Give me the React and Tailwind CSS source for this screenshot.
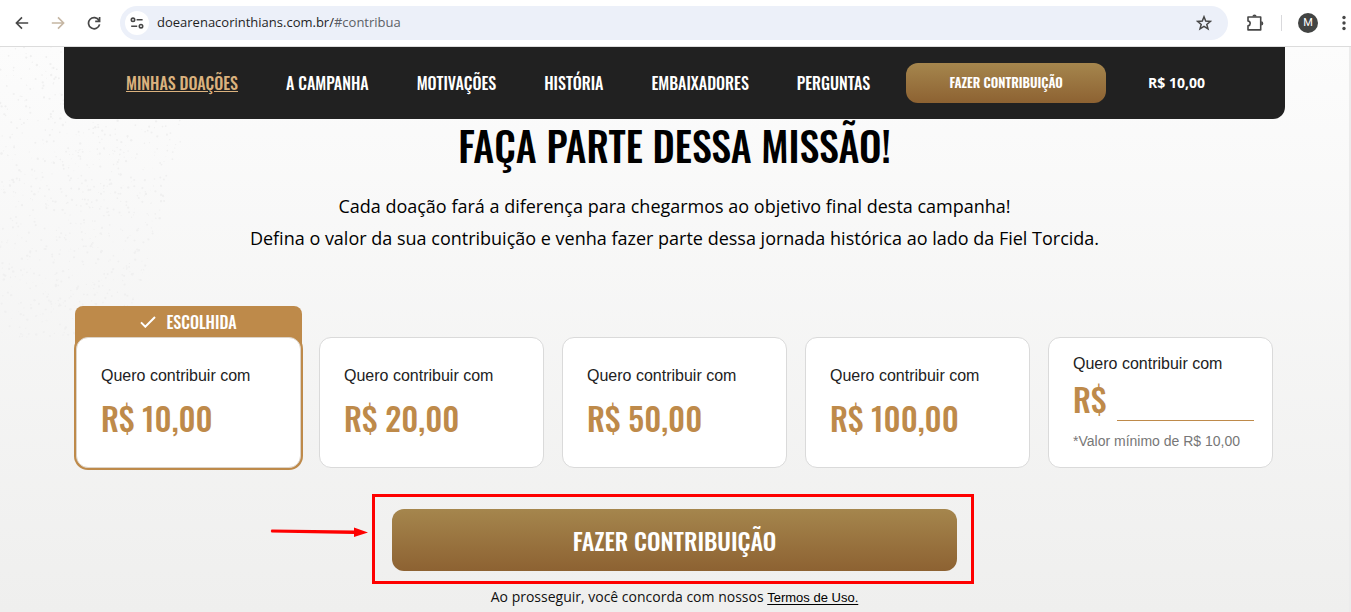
import { useState } from "react";

const links = [
  { label: "MINHAS DOAÇÕES", href: "#doacoes", active: true },
  { label: "A CAMPANHA", href: "#campanha" },
  { label: "MOTIVAÇÕES", href: "#motivacoes" },
  { label: "HISTÓRIA", href: "#historia" },
  { label: "EMBAIXADORES", href: "#embaixadores" },
  { label: "PERGUNTAS", href: "#perguntas" },
];

const amounts = ["10,00", "20,00", "50,00", "100,00"];

// spreads paper grain along the left edge, denser near the border
const specks = Array.from({ length: 900 }, (_, i) => {
  const a = Math.abs(Math.sin(i * 12.9898) * 43758.5453) % 1;
  const b = Math.abs(Math.sin(i * 78.233) * 12543.123) % 1;
  const c = Math.abs(Math.sin(i * 39.425) * 9631.77) % 1;
  return { x: a * (1 - b * 0.4) * 210, y: b * 290, r: 0.4 + c * 0.8 };
});

function BrowserBar() {
  return (
    <header className="flex h-[47px] items-center border-b border-[#dcdcdc] bg-white pl-3 text-[#474747]">
      <button type="button" aria-label="Voltar" className="flex size-5 items-center justify-center">
        <svg viewBox="0 0 14 14" className="size-3.5" fill="none" stroke="currentColor" strokeWidth="1.6">
          <path d="M13.2 7H1.6M7 1.4 1.4 7 7 12.6" />
        </svg>
      </button>
      <button type="button" aria-label="Avançar" className="ml-4 flex size-5 items-center justify-center text-[#c5b6a3]">
        <svg viewBox="0 0 14 14" className="size-3.5" fill="none" stroke="currentColor" strokeWidth="1.6">
          <path d="M.8 7h11.6M7 1.4 12.6 7 7 12.6" />
        </svg>
      </button>
      <button type="button" aria-label="Recarregar" className="ml-4 flex size-5 items-center justify-center">
        <svg viewBox="0 0 14 14" className="size-3.5" fill="none" stroke="currentColor" strokeWidth="1.7">
          <path d="M12 4.4A5.6 5.6 0 1 0 12.6 8.4M12.6 1v4.3H8.2" />
        </svg>
      </button>

      <div className="ml-4 flex h-[34px] min-w-0 flex-1 items-center rounded-full bg-[#ecf0f9] pr-4 pl-[5px]">
        <button type="button" aria-label="Informações do site" className="flex size-6 items-center justify-center rounded-full bg-white">
          <svg viewBox="0 0 14 12" className="h-3 w-3.5" fill="none" stroke="currentColor" strokeWidth="1.6">
            <circle cx="3" cy="2.8" r="1.7" />
            <path d="M6.6 2.8h6M1.2 9.2h6" />
            <circle cx="11" cy="9.2" r="1.7" />
          </svg>
        </button>
        <p className="ml-2 flex-1 truncate font-['Open_Sans',sans-serif] text-[13px] text-[#1f1f1f]">
          doearenacorinthians.com.br/<span className="text-[#5c5f66]">#contribua</span>
        </p>
        <button type="button" aria-label="Favoritar">
          <svg viewBox="0 0 16 16" className="size-4" fill="none" stroke="currentColor" strokeWidth="1.5">
            <path d="m8 1.8 1.7 4.3 4.7.3-3.6 3 1.2 4.5L8 11.4l-4 2.5 1.2-4.5-3.6-3 4.7-.3Z" />
          </svg>
        </button>
      </div>

      <button type="button" aria-label="Extensões" className="ml-[18px]">
        <svg viewBox="0 0 18 18" className="size-[18px]" fill="none" stroke="currentColor" strokeWidth="1.6">
          <path d="M2 3h12.700v12.900H2v-4c2.900-.7 2.900-4.300 0-5Z" strokeLinejoin="round" />
          <path d="M6.400 2.600a2.100 2.100 0 0 1 4.200 0ZM15.200 7.300a2.100 2.100 0 0 1 0 4.200Z" fill="currentColor" stroke="none" />
        </svg>
      </button>
      <span className="ml-[17px] h-4 w-px bg-[#d9d9dc]" />
      <button
        type="button"
        aria-label="Perfil"
        className="ml-4 size-5 rounded-full bg-[#424443] text-center font-[Roboto,sans-serif] text-[11px] leading-5 text-white"
      >
        M
      </button>
      <button type="button" aria-label="Menu" className="mr-px ml-5 flex w-3 justify-center">
        <svg viewBox="0 0 4 16" className="h-4 w-1" fill="currentColor">
          <circle cx="2" cy="2.500" r="1.700" />
          <circle cx="2" cy="8" r="1.700" />
          <circle cx="2" cy="13.500" r="1.700" />
        </svg>
      </button>
    </header>
  );
}

function NavBar() {
  return (
    <nav className="mx-16 flex h-[72px] items-center rounded-b-xl bg-[#212121] pl-[62px] font-['Oswald',sans-serif] font-medium text-white">
      <ul className="flex gap-12 text-base">
        {links.map((link) => (
          <li key={link.label} className="whitespace-nowrap">
            <a href={link.href} className={link.active ? "text-[#dbb27e] underline underline-offset-1" : ""}>
              {link.label}
            </a>
          </li>
        ))}
      </ul>
      <button type="button" className="ml-9 h-10 w-[200px] rounded-xl bg-linear-to-b from-[#a5864d] to-[#8d6232] text-[13px] font-semibold">
        FAZER CONTRIBUIÇÃO
      </button>
      <span className="ml-[42px] font-['Open_Sans',sans-serif] text-sm font-bold whitespace-nowrap">R$ 10,00</span>
    </nav>
  );
}

function AmountCard({ amount, checked, onSelect }) {
  return (
    <label className="relative block cursor-pointer">
      <input type="radio" name="valor" value={amount} checked={checked} onChange={onSelect} className="sr-only" />
      {checked && (
        <span className="absolute inset-x-0 -top-[31px] -mx-px flex h-12 items-start justify-center gap-2.5 rounded-t-lg bg-[#be8a4a] pt-1 font-['Oswald',sans-serif] text-base font-medium text-white">
          <svg viewBox="0 0 16 12" className="mt-1.5 h-3 w-4" fill="none" stroke="currentColor" strokeWidth="2">
            <path d="m1 6.400 4.300 4.300L15 1" />
          </svg>
          ESCOLHIDA
        </span>
      )}
      <span
        className={`relative block h-[131px] rounded-xl border bg-white px-6 pt-[26px] ${
          checked ? "border-[#dcd3c8] ring-2 ring-[#be8a4a]" : "border-[#dadada]"
        }`}
      >
        <span className="block text-base text-[#222]">Quero contribuir com</span>
        <span className="mt-2.5 block font-['Oswald',sans-serif] text-[32px] leading-10 font-medium text-[#be8a4a]">
          R$ {amount}
        </span>
      </span>
    </label>
  );
}

function App() {
  const [selected, setSelected] = useState("10,00");
  const [custom, setCustom] = useState("");

  return (
    <div className="min-h-screen bg-white font-['Liberation_Sans',Arial,sans-serif]">
      <BrowserBar />
      <main className="relative border-r-2 border-[#ececec] bg-linear-to-b from-[#fcfcfc] to-[#efefee] pb-1">
        <svg className="pointer-events-none absolute top-0 left-0 h-[340px] w-60" fill="#f0f0f0">
          {specks.map((s, i) => (
            <circle key={i} cx={s.x} cy={s.y} r={s.r} />
          ))}
        </svg>

        <div className="relative">
          <NavBar />

          <section id="contribua" className="text-center text-black">
            <h1 className="font-['Oswald',sans-serif] text-[40px] leading-[52px] font-medium">
              FAÇA PARTE DESSA MISSÃO!
            </h1>
            <p className="mt-[19px] font-['Open_Sans',sans-serif] text-lg leading-8">
              Cada doação fará a diferença para chegarmos ao objetivo final desta campanha!
              <br />
              Defina o valor da sua contribuição e venha fazer parte dessa jornada histórica ao lado da Fiel Torcida.
            </p>
          </section>

          <form onSubmit={(e) => e.preventDefault()}>
            <div className="mx-[76px] mt-[83px] grid grid-cols-5 gap-[18px]">
              {amounts.map((amount) => (
                <AmountCard
                  key={amount}
                  amount={amount}
                  checked={selected === amount}
                  onSelect={() => setSelected(amount)}
                />
              ))}
              <div className="h-[131px] rounded-xl border border-[#dadada] bg-white pt-3.5 pr-[18px] pl-6">
                <label htmlFor="outro" className="block text-base text-[#222]">
                  Quero contribuir com
                </label>
                <div className="flex h-[45px] items-end gap-2.5">
                  <span className="font-['Oswald',sans-serif] text-[32px] leading-[45px] font-medium text-[#be8a4a]">
                    R$
                  </span>
                  <input
                    id="outro"
                    type="text"
                    inputMode="decimal"
                    value={custom}
                    onChange={(e) => setCustom(e.target.value)}
                    className="h-9 min-w-0 flex-1 border-b border-b-[#be8a4a] bg-transparent text-2xl text-[#be8a4a] outline-none"
                  />
                </div>
                <p className="mt-2.5 text-sm text-[#777]">*Valor mínimo de R$ 10,00</p>
              </div>
            </div>

            <div className="relative mx-auto mt-[41px] w-full max-w-[565px]">
              <div className="pointer-events-none absolute -top-[15px] -right-[17px] -bottom-[13px] -left-5 border-3 border-[#fe0000]">
                <svg viewBox="0 0 98 12" className="absolute top-[29px] right-full mr-[7px] h-3 w-[98px]" fill="#fe0000">
                  <path d="M1.500 3.500 84 4.500V1.500l14 5-14 4.500V8L1.500 6.500Q0 5 1.500 3.500Z" />
                </svg>
              </div>
              <button
                type="submit"
                className="block h-[62px] w-full rounded-xl bg-linear-to-b from-[#a5864d] to-[#8d6232] font-['Oswald',sans-serif] text-2xl font-medium text-white"
              >
                FAZER CONTRIBUIÇÃO
              </button>
            </div>
            <p className="mt-4 text-center font-['Open_Sans',sans-serif] text-sm text-[#111]">
              Ao prosseguir, você concorda com nossos{" "}
              <a href="#termos" className="font-['Liberation_Sans',Arial,sans-serif] text-[13px] text-black underline underline-offset-2">
                Termos de Uso.
              </a>
            </p>
          </form>
        </div>
      </main>
    </div>
  );
}

export default App;
